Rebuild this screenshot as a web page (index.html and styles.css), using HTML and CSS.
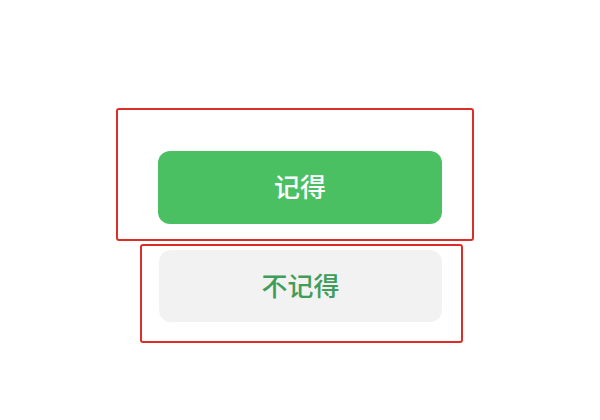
FILE: index.html
```html
<!DOCTYPE html>
<html lang="zh-CN">
<head>
<meta charset="utf-8">
<link rel="stylesheet" href="styles.css">
</head>
<body>
<div class="page">
  <div class="frame frame-primary">
    <div class="btn btn-primary">记得</div>
  </div>
  <div class="frame frame-secondary">
    <div class="btn btn-secondary">不记得</div>
  </div>
</div>
</body>
</html>
```
FILE: styles.css
```css
html, body {
  margin: 0;
  padding: 0;
  background: #ffffff;
}
.page {
  width: 600px;
  height: 420px;
  display: flex;
  flex-direction: column;
  align-items: flex-start;
  font-family: "Noto Sans CJK SC", "Noto Sans", sans-serif;
}
.frame {
  box-sizing: border-box;
  border: 2px solid #da2f28;
  border-radius: 3px;
}
.frame-primary {
  margin-top: 108px;
  margin-left: 116px;
  width: 358px;
  padding: 41px 0 15px 40px;
}
.frame-secondary {
  margin-top: 3px;
  margin-left: 140px;
  width: 323px;
  padding: 4px 0 19px 17px;
}
.btn {
  box-sizing: border-box;
  display: flex;
  align-items: center;
  justify-content: center;
  padding-bottom: 3px;
  border-radius: 12px;
  font-size: 26px;
  font-weight: 500;
  line-height: 1;
}
.btn-primary {
  width: 284px;
  height: 73px;
  background: #4bc063;
  color: #ffffff;
}
.btn-secondary {
  width: 283px;
  height: 72px;
  background: #f2f2f2;
  color: #3f9d5a;
}
```
